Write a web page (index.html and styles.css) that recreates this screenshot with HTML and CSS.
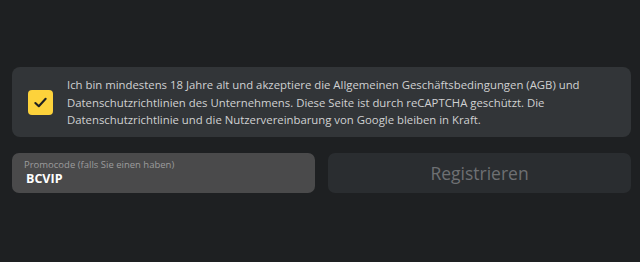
FILE: index.html
```html
<!DOCTYPE html>
<html lang="de">
<head>
  <meta charset="UTF-8">
  <title>Registrieren</title>
  <link rel="stylesheet" href="styles.css">
</head>
<body>
  <div class="form">
    <label class="terms">
      <span class="check">
        <svg width="15" height="15" viewBox="0 0 16 16"><path d="M2.5 8.5 L6.2 12 L13.5 4" fill="none" stroke="#1e2022" stroke-width="2.2" stroke-linecap="round" stroke-linejoin="round"/></svg>
      </span>
      <span class="terms-text">Ich bin mindestens 18 Jahre alt und akzeptiere die Allgemeinen Geschäftsbedingungen (AGB) und Datenschutzrichtlinien des Unternehmens. Diese Seite ist durch reCAPTCHA geschützt. Die Datenschutzrichtlinie und die Nutzervereinbarung von Google bleiben in Kraft.</span>
    </label>
    <div class="row">
      <div class="promo">
        <span class="promo-label">Promocode (falls Sie einen haben)</span>
        <span class="promo-value">BCVIP</span>
      </div>
      <button class="submit">Registrieren</button>
    </div>
  </div>
</body>
</html>
```

FILE: styles.css
```css
* {
  margin: 0;
  padding: 0;
  box-sizing: border-box;
}

body {
  background: #1e2022;
  font-family: "Open Sans", "Liberation Sans", sans-serif;
}

.form {
  padding: 67px 9px 0 12px;
}

.terms {
  display: flex;
  align-items: center;
  height: 70px;
  padding: 0 16px;
  background: #323538;
  border-radius: 8px;
}

.check {
  flex: none;
  display: flex;
  align-items: center;
  justify-content: center;
  width: 25px;
  height: 25px;
  margin-right: 14px;
  background: #fdd23b;
  border-radius: 4px;
}

.terms-text {
  font-size: 11.35px;
  line-height: 17.5px;
  color: #d0d1d2;
  padding-top: 1px;
}

.row {
  display: grid;
  grid-template-columns: 1fr 1fr;
  gap: 13px;
  margin-top: 16px;
}

.promo {
  display: flex;
  flex-direction: column;
  height: 40px;
  padding: 6px 12px 0;
  background: #4a4a4b;
  border-radius: 7px;
}

.promo-label {
  font-size: 9.5px;
  line-height: 12px;
  color: #9c9c9d;
}

.promo-value {
  font-size: 12.5px;
  font-weight: 700;
  line-height: 15px;
  color: #ffffff;
  padding-left: 2px;
}

.submit {
  height: 40px;
  border: 0;
  border-radius: 7px;
  background: #2a2d30;
  color: #6e7073;
  font-family: inherit;
  font-size: 17.5px;
}
```
